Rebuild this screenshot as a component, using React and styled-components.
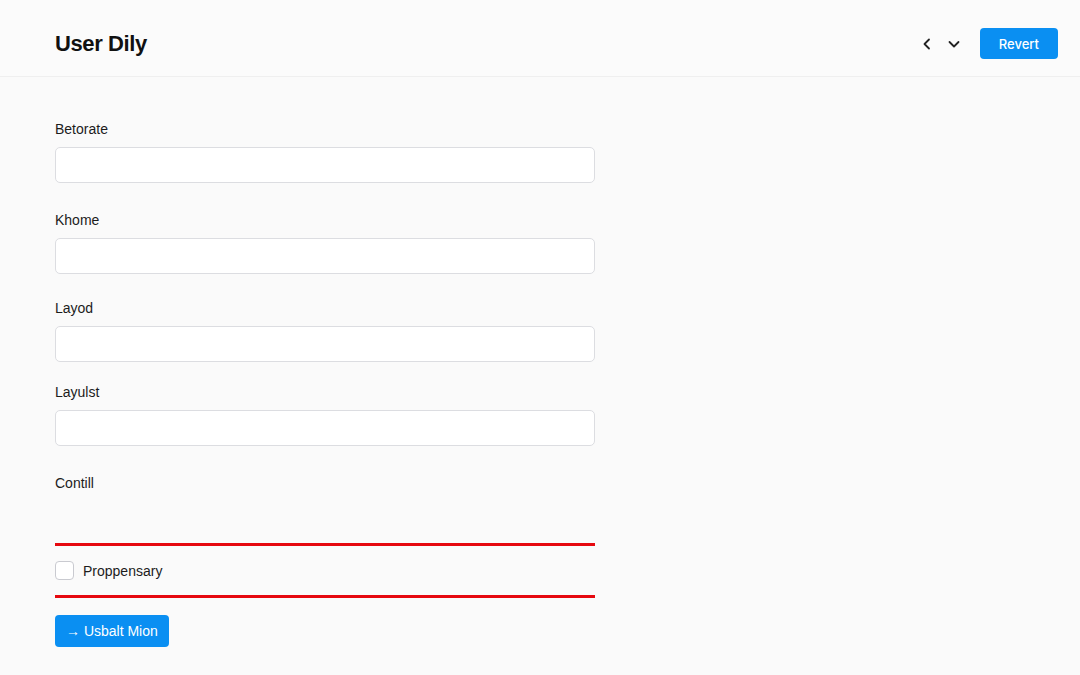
import React from 'react';
import styled, { createGlobalStyle } from 'styled-components';

const GlobalStyle = createGlobalStyle`
  html, body {
    margin: 0;
    padding: 0;
    background: #fafafa;
    font-family: 'Liberation Sans', Arial, sans-serif;
    color: #1a1a1a;
  }
  * { box-sizing: border-box; }
`;

const Page = styled.div`
  width: 1080px;
  height: 675px;
  overflow: hidden;
  background: #fafafa;
`;

const Header = styled.header`
  height: 77px;
  display: flex;
  align-items: center;
  justify-content: space-between;
  padding: 11px 22px 0 55px;
  border-bottom: 1px solid #efefef;
  background: #fbfbfb;
`;

const Title = styled.h1`
  margin: 0;
  font-size: 22px;
  font-weight: 700;
  letter-spacing: -0.4px;
  color: #111;
`;

const Actions = styled.div`
  display: flex;
  align-items: center;
`;

const IconButton = styled.button`
  width: 26px;
  height: 26px;
  border: none;
  background: transparent;
  padding: 0;
  display: flex;
  align-items: center;
  justify-content: center;
  color: #222;
  margin-right: ${(p) => p.$gap || 0}px;
  cursor: pointer;
`;

const PrimaryButton = styled.button`
  height: ${(p) => p.$h || 32}px;
  padding: 0 ${(p) => p.$px || 12}px;
  border: none;
  border-radius: 4px;
  background: #0a8ff2;
  color: #fff;
  font-family: ${(p) => (p.$inter ? "Inter, 'Liberation Sans', sans-serif" : "'Liberation Sans', Arial, sans-serif")};
  font-size: ${(p) => p.$fs || 13}px;
  font-weight: ${(p) => (p.$inter ? 500 : 400)};
  display: flex;
  align-items: center;
  gap: 5px;
  cursor: pointer;
`;

const Form = styled.main`
  width: 540px;
  margin-left: 55px;
  padding-top: 43px;
  display: flex;
  flex-direction: column;
`;

const Field = styled.div`
  display: flex;
  flex-direction: column;
  margin-bottom: ${(p) => p.$after}px;
`;

const Label = styled.label`
  font-size: 14px;
  line-height: 18px;
  color: #1c1c1c;
  margin-bottom: 9px;
`;

const Input = styled.input`
  height: 36px;
  width: 100%;
  border: 1px solid #dcdde1;
  border-radius: 5px;
  background: #fff;
  padding: 0 12px;
  font-size: 14px;
  outline: none;
`;

const Spacer = styled.div`
  height: ${(p) => p.$h}px;
`;

const RedRule = styled.div`
  height: 3px;
  background: #e6080f;
`;

const CheckRow = styled.label`
  height: 49px;
  display: flex;
  align-items: center;
  gap: 9px;
  font-size: 14px;
  color: #1c1c1c;
`;

const Box = styled.span`
  width: 19px;
  height: 19px;
  border: 1px solid #c9cad0;
  border-radius: 4px;
  background: #fff;
`;

const Footer = styled.div`
  padding-top: 17px;
  display: flex;
`;

const fields = [
  { label: 'Betorate', after: 28 },
  { label: 'Khome', after: 25 },
  { label: 'Layod', after: 21 },
  { label: 'Layulst', after: 28 },
];

export default function App() {
  return (
    <Page>
      <GlobalStyle />
      <Header>
        <Title>User Dily</Title>
        <Actions>
          <IconButton $gap={1} aria-label="Back">
            <svg width="14" height="14" viewBox="0 0 14 14" fill="none" stroke="currentColor" strokeWidth="1.8" strokeLinecap="round" strokeLinejoin="round">
              <path d="M9 2.5 4.5 7 9 11.5" />
            </svg>
          </IconButton>
          <IconButton $gap={13} aria-label="More">
            <svg width="14" height="14" viewBox="0 0 14 14" fill="none" stroke="currentColor" strokeWidth="1.8" strokeLinecap="round" strokeLinejoin="round">
              <path d="M2.5 5 7 9.5 11.5 5" />
            </svg>
          </IconButton>
          <PrimaryButton $inter $px={19} $h={31}>Revert</PrimaryButton>
        </Actions>
      </Header>
      <Form>
        {fields.map((f) => (
          <Field key={f.label} $after={f.after}>
            <Label>{f.label}</Label>
            <Input />
          </Field>
        ))}
        <Label>Contill</Label>
        <Spacer $h={42} />
        <RedRule />
        <CheckRow>
          <Box />
          Proppensary
        </CheckRow>
        <RedRule />
        <Footer>
          <PrimaryButton $px={11} $fs={14}>→ Usbalt Mion</PrimaryButton>
        </Footer>
      </Form>
    </Page>
  );
}
